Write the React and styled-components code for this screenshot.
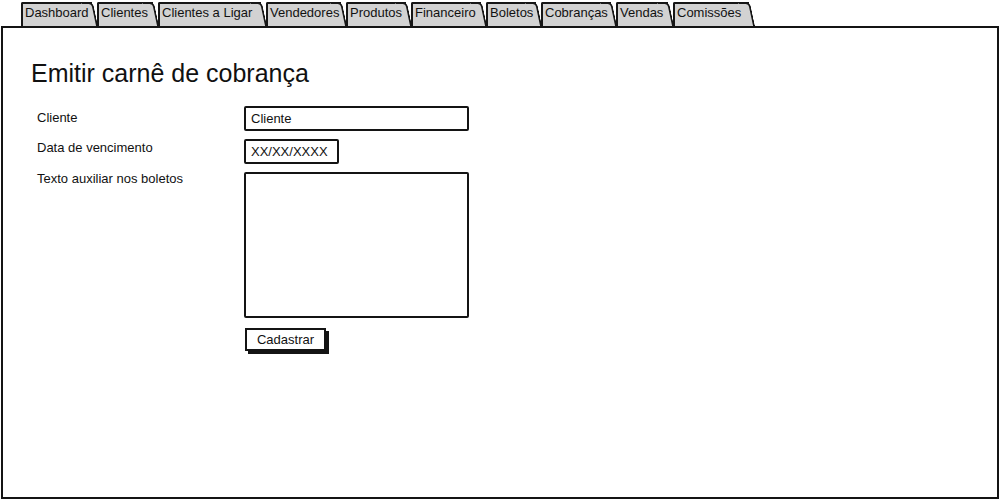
import React from 'react';
import styled, { createGlobalStyle } from 'styled-components';

const GlobalStyle = createGlobalStyle`
  body {
    margin: 0;
    background: #fff;
    font-family: "Liberation Sans", Arial, sans-serif;
    color: #111;
  }
  * { box-sizing: border-box; }
`;

const Page = styled.div`
  width: 1000px;
  height: 500px;
  padding-top: 2px;
  overflow: hidden;
`;

const TabStrip = styled.div`
  display: flex;
  padding-left: 21px;
  height: 24px;
`;

const Tab = styled.div`
  position: relative;
  flex: 0 0 ${p => p.$w - 5}px;
  margin-right: 5px;
  height: 24px;
  padding: 0 0 4px 2px;
  background: #d2d2d2;
  border-left: 2px solid #161616;
  border-top: 2px solid #161616;
  border-top-left-radius: 2px;
  font-size: 13px;
  line-height: 18px;
  white-space: nowrap;

  &::before {
    content: '';
    position: absolute;
    top: -2px;
    bottom: 0;
    right: -1px;
    width: 10px;
    background: #d2d2d2;
    border-top: 2px solid #161616;
    border-right: 2px solid #161616;
    border-top-right-radius: 5px;
    transform: skewX(12deg);
    transform-origin: top left;
  }
`;

const TabLabel = styled.span`
  position: relative;
`;

const Panel = styled.div`
  margin-left: 1px;
  width: 998px;
  height: 473px;
  border: 2px solid #141414;
  padding: 31px 0 0 28px;
`;

const Title = styled.h1`
  margin: 0 0 18px;
  font-size: 25px;
  line-height: 29px;
  font-weight: normal;
`;

const Form = styled.div`
  display: flex;
  margin-left: 6px;
`;

const LabelCol = styled.div`
  flex: 0 0 207px;
  display: flex;
  flex-direction: column;
  gap: 14.5px;
  padding-top: 3.7px;
`;

const Label = styled.div`
  font-size: 13px;
  line-height: 16px;
`;

const FieldCol = styled.div`
  display: flex;
  flex-direction: column;
  align-items: flex-start;
  gap: 8px;
`;

const Field = styled.div`
  width: ${p => p.$w}px;
  height: ${p => p.$h || 25}px;
  border: 2px solid #141414;
  border-radius: 2px;
  padding: 0 5px;
  font-size: 13px;
  line-height: 21px;
  background: #fff;
`;

const Button = styled.div`
  margin: 2px 0 0 1px;
  width: 81px;
  height: 23px;
  border: 2px solid #141414;
  box-shadow: 3px 3px 0 #141414;
  font-size: 13px;
  line-height: 19px;
  text-align: center;
  background: #fff;
`;

const tabs = [
  ['Dashboard', 76],
  ['Clientes', 61],
  ['Clientes a Ligar', 108],
  ['Vendedores', 80],
  ['Produtos', 65],
  ['Financeiro', 75],
  ['Boletos', 55],
  ['Cobranças', 75],
  ['Vendas', 57],
  ['Comissões', 81],
];

export default function App() {
  return (
    <Page>
      <GlobalStyle />
      <TabStrip>
        {tabs.map(([name, w]) => (
          <Tab key={name} $w={w}>
            <TabLabel>{name}</TabLabel>
          </Tab>
        ))}
      </TabStrip>
      <Panel>
        <Title>Emitir carnê de cobrança</Title>
        <Form>
          <LabelCol>
            <Label>Cliente</Label>
            <Label>Data de vencimento</Label>
            <Label>Texto auxiliar nos boletos</Label>
          </LabelCol>
          <FieldCol>
            <Field $w={225}>Cliente</Field>
            <Field $w={95}>XX/XX/XXXX</Field>
            <Field $w={225} $h={146} />
            <Button>Cadastrar</Button>
          </FieldCol>
        </Form>
      </Panel>
    </Page>
  );
}
